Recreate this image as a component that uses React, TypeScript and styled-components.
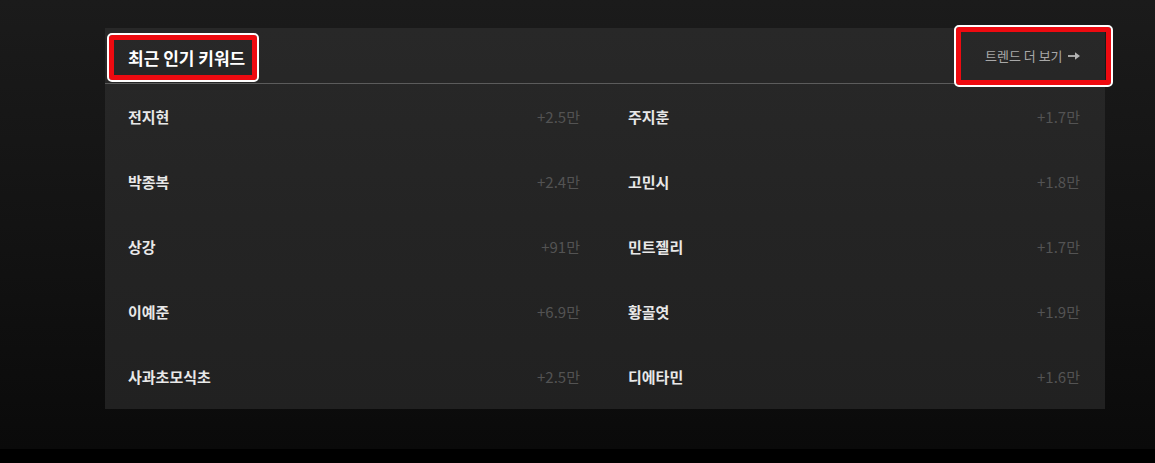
import React from "react";
import styled, { createGlobalStyle } from "styled-components";

const GlobalStyle = createGlobalStyle`
  html, body { margin: 0; padding: 0; background: #000; }
  body { font-family: "Noto Sans CJK KR", "Noto Sans", sans-serif; }
`;

const Page = styled.section`
  height: 449px;
  box-sizing: border-box;
  padding: 28px 0 0 105px;
  background: linear-gradient(180deg, #1b1b1b 0%, #131313 50%, #0a0a0a 100%);
`;

const Card = styled.div`
  width: 1000px;
  background: linear-gradient(180deg, #282828 0%, #242424 50%, #212121 100%);
`;

const Header = styled.div`
  height: 55px;
  display: flex;
  align-items: center;
  justify-content: space-between;
  border-bottom: 1px solid #5c5c5c;
`;

const Highlight = styled.div`
  box-sizing: border-box;
  border: 5px solid #ee0a10;
  outline: 2px solid #ffffff;
  border-radius: 3px;
  display: flex;
  align-items: center;
`;

const Title = styled(Highlight)`
  width: 148px;
  height: 45px;
  margin: 4px 0 0 4px;
  padding-left: 14px;
  color: #ffffff;
  font-size: 17px;
  font-weight: 700;
  white-space: nowrap;
`;

const MoreButton = styled(Highlight)`
  width: 155px;
  height: 58px;
  margin-right: -6px;
  padding-left: 24px;
  gap: 5px;
  color: #a8a8a8;
  font-size: 13px;
  cursor: pointer;
  white-space: nowrap;
`;

const Grid = styled.div`
  display: grid;
  grid-template-columns: 1fr 1fr;
`;

const Item = styled.div`
  height: 65px;
  box-sizing: border-box;
  padding: 0 25px 0 23px;
  display: flex;
  align-items: center;
  justify-content: space-between;
`;

const Name = styled.span`
  color: #e8e8e8;
  font-size: 15px;
  font-weight: 700;
`;

const Count = styled.span`
  color: #535353;
  font-size: 15px;
`;

const Arrow = () => (
  <svg width="12" height="8" viewBox="0 0 12 8" aria-hidden="true">
    <path d="M0 3.1h7.5v1.8H0z" fill="#b4b4b4" />
    <path d="M7 0.3 12 4 7 7.7z" fill="#b4b4b4" />
  </svg>
);

const left: [string, string][] = [
  ["전지현", "+2.5만"],
  ["박종복", "+2.4만"],
  ["상강", "+91만"],
  ["이예준", "+6.9만"],
  ["사과초모식초", "+2.5만"],
];

const right: [string, string][] = [
  ["주지훈", "+1.7만"],
  ["고민시", "+1.8만"],
  ["민트젤리", "+1.7만"],
  ["황골엿", "+1.9만"],
  ["디에타민", "+1.6만"],
];

export default function App() {
  return (
    <>
      <GlobalStyle />
      <Page>
        <Card>
          <Header>
            <Title>최근 인기 키워드</Title>
            <MoreButton>
              트렌드 더 보기 <Arrow />
            </MoreButton>
          </Header>
          <Grid>
            {left.map((l, i) => (
              <React.Fragment key={i}>
                <Item>
                  <Name>{l[0]}</Name>
                  <Count>{l[1]}</Count>
                </Item>
                <Item>
                  <Name>{right[i][0]}</Name>
                  <Count>{right[i][1]}</Count>
                </Item>
              </React.Fragment>
            ))}
          </Grid>
        </Card>
      </Page>
    </>
  );
}
